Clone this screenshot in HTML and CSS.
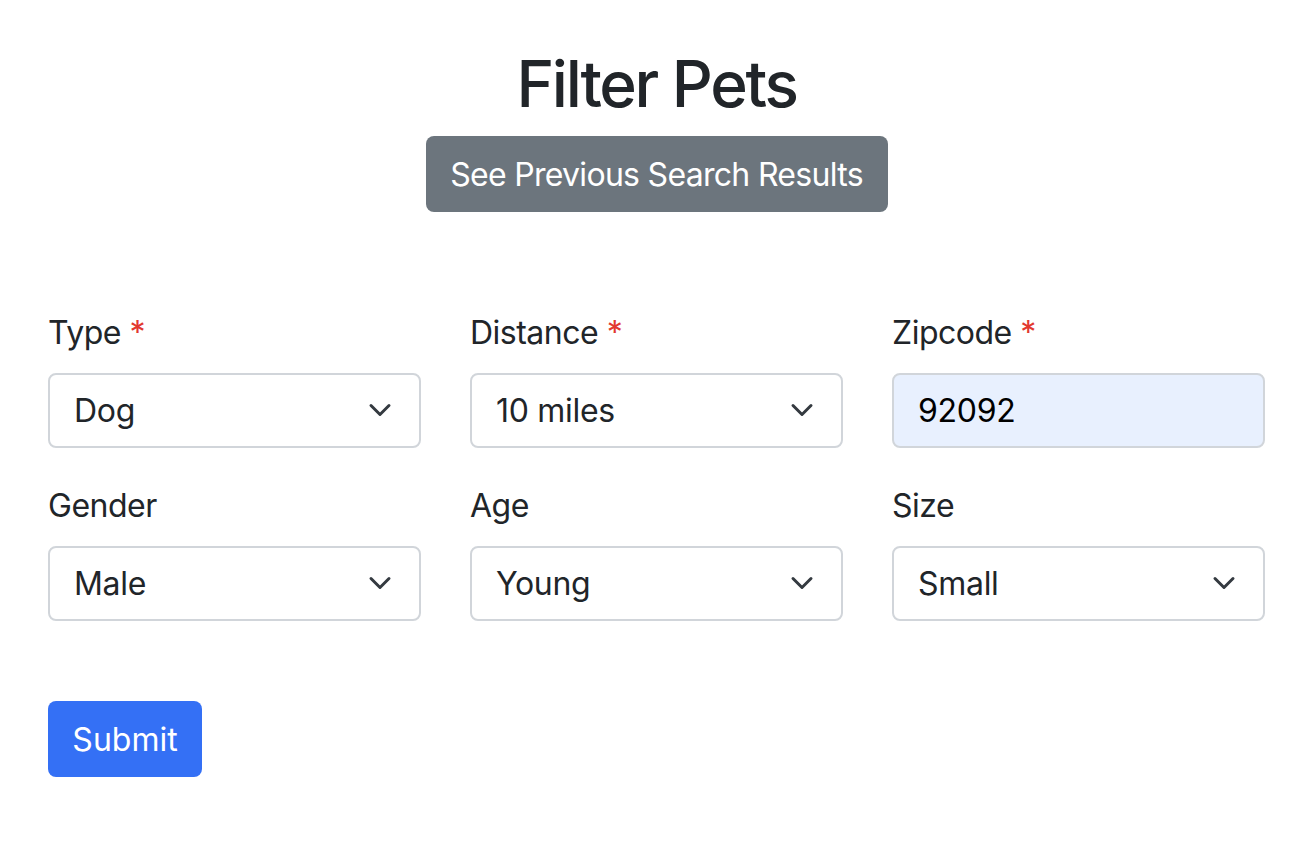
FILE: index.html
```html
<!DOCTYPE html>
<html lang="en">
<head>
<meta charset="utf-8">
<title>Filter Pets</title>
<link rel="stylesheet" href="styles.css">
</head>
<body>
<main class="page">
  <header class="head">
    <h1 class="title">Filter Pets</h1>
    <button type="button" class="btn btn-secondary">See Previous Search Results</button>
  </header>
  <form class="filter-form">
    <div class="fields">
      <div class="field">
        <label class="label" for="type">Type <span class="req">*</span></label>
        <div class="select-wrap">
          <select id="type" class="control select"><option>Dog</option></select>
          <svg class="chev" viewBox="0 0 16 16" width="24" height="24"><path d="m2 5 6 6 6-6" fill="none" stroke="#343a40" stroke-width="2" stroke-linecap="round" stroke-linejoin="round"/></svg>
        </div>
      </div>
      <div class="field">
        <label class="label" for="distance">Distance <span class="req">*</span></label>
        <div class="select-wrap">
          <select id="distance" class="control select"><option>10 miles</option></select>
          <svg class="chev" viewBox="0 0 16 16" width="24" height="24"><path d="m2 5 6 6 6-6" fill="none" stroke="#343a40" stroke-width="2" stroke-linecap="round" stroke-linejoin="round"/></svg>
        </div>
      </div>
      <div class="field">
        <label class="label" for="zip">Zipcode <span class="req">*</span></label>
        <input id="zip" class="control input autofilled" type="text" value="92092">
      </div>
      <div class="field">
        <label class="label" for="gender">Gender</label>
        <div class="select-wrap">
          <select id="gender" class="control select"><option>Male</option></select>
          <svg class="chev" viewBox="0 0 16 16" width="24" height="24"><path d="m2 5 6 6 6-6" fill="none" stroke="#343a40" stroke-width="2" stroke-linecap="round" stroke-linejoin="round"/></svg>
        </div>
      </div>
      <div class="field">
        <label class="label" for="age">Age</label>
        <div class="select-wrap">
          <select id="age" class="control select"><option>Young</option></select>
          <svg class="chev" viewBox="0 0 16 16" width="24" height="24"><path d="m2 5 6 6 6-6" fill="none" stroke="#343a40" stroke-width="2" stroke-linecap="round" stroke-linejoin="round"/></svg>
        </div>
      </div>
      <div class="field">
        <label class="label" for="size">Size</label>
        <div class="select-wrap">
          <select id="size" class="control select"><option>Small</option></select>
          <svg class="chev" viewBox="0 0 16 16" width="24" height="24"><path d="m2 5 6 6 6-6" fill="none" stroke="#343a40" stroke-width="2" stroke-linecap="round" stroke-linejoin="round"/></svg>
        </div>
      </div>
    </div>
    <div class="actions">
      <button type="submit" class="btn btn-primary">Submit</button>
    </div>
  </form>
</main>
</body>
</html>
```
FILE: styles.css
```css
* { box-sizing: border-box; }
html, body { margin: 0; background: #fff; }
body {
  font-family: Inter, "Noto Sans", "Liberation Sans", sans-serif;
  color: #212529;
  font-size: 32px;
  line-height: 1.5;
  letter-spacing: -0.5px;
}
.page {
  width: 1217px;
  margin-left: 48px;
}
.head {
  display: flex;
  flex-direction: column;
  align-items: center;
  padding-top: 46px;
}
.title {
  margin: 0;
  font-size: 64px;
  font-weight: 500;
  line-height: 1.2;
  letter-spacing: -2.3px;
}
.btn {
  font-family: inherit;
  font-size: 32px;
  line-height: 1.5;
  font-weight: 400;
  color: #fff;
  border: none;
  border-radius: 8px;
  padding: 15px 0 13px;
  cursor: pointer;
  white-space: nowrap;
}
.btn-secondary {
  background: #6c757d;
  margin-top: 13px;
  width: 462px;
  letter-spacing: -0.7px;
}
.btn-primary {
  background: #3470f5;
  width: 154px;
}
.filter-form {
  margin-top: 97px;
}
.fields {
  display: grid;
  grid-template-columns: repeat(3, 1fr);
  column-gap: 49px;
  row-gap: 34px;
}
.field {
  display: flex;
  flex-direction: column;
}
.label {
  display: block;
  margin-bottom: 16px;
  line-height: 48px;
}
.req { color: #e2382f; }
.select-wrap { position: relative; }
.control {
  display: block;
  width: 100%;
  height: 75px;
  font-family: inherit;
  font-size: 32px;
  letter-spacing: -0.3px;
  color: #212529;
  background: #fff;
  border: 2px solid #d1d5da;
  border-radius: 8px;
  padding: 0 24px;
  margin: 0;
  outline: none;
}
.select {
  appearance: none;
  -webkit-appearance: none;
  padding-right: 72px;
}
.autofilled {
  background: #e8f0fe;
  color: #000;
}
.chev {
  position: absolute;
  right: 29px;
  top: 50%;
  margin-top: -12px;
  pointer-events: none;
}
.actions {
  margin-top: 80px;
}
```
